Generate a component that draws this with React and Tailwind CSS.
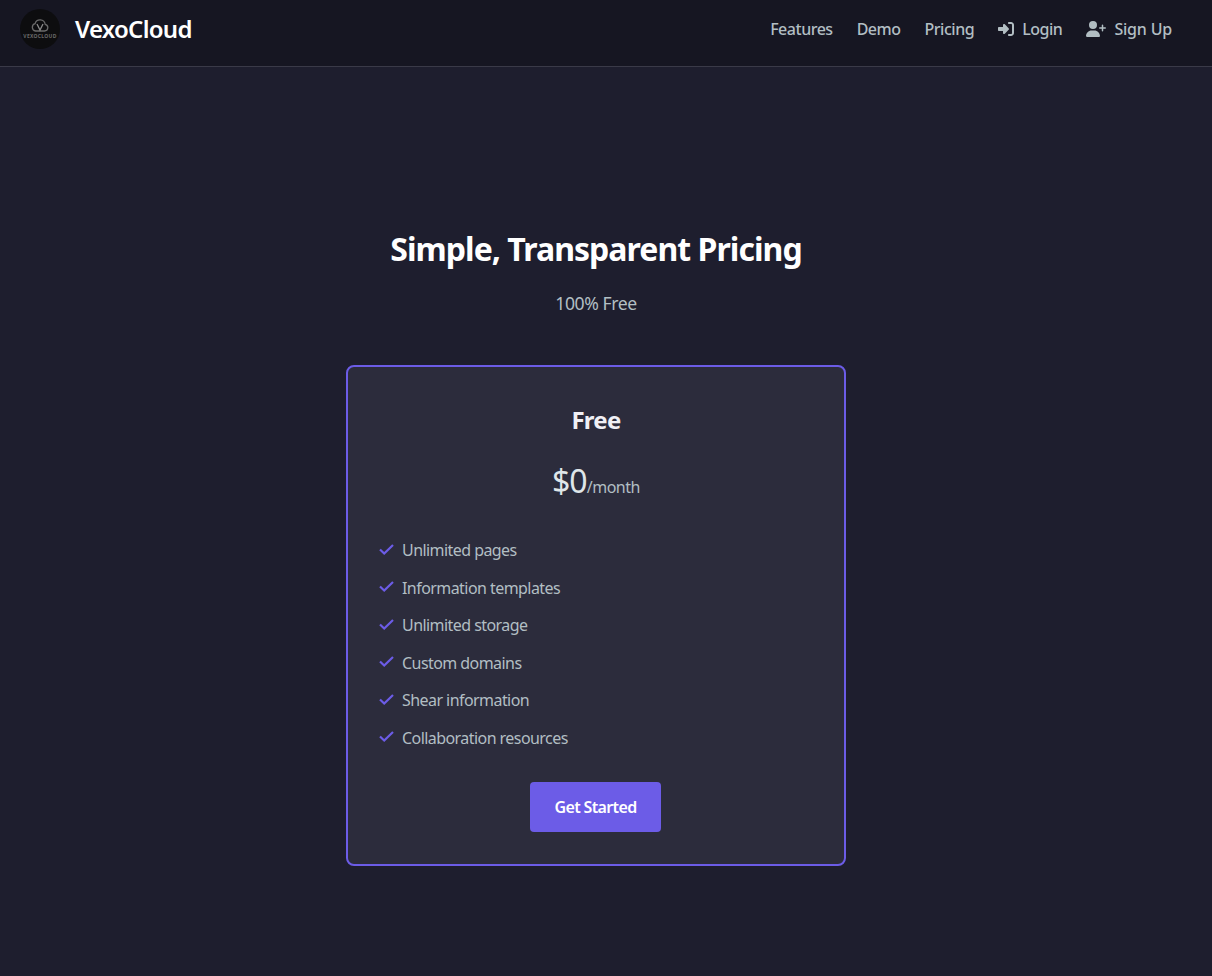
import { FaRightToBracket, FaUserPlus } from "react-icons/fa6";

const features = [
  "Unlimited pages",
  "Information templates",
  "Unlimited storage",
  "Custom domains",
  "Shear information",
  "Collaboration resources",
];

function Logo() {
  return (
    <div className="w-10 h-10 rounded-full bg-[#0d0d0f] flex flex-col items-center justify-center">
      <svg className="w-[18px] h-[13px]" viewBox="0 0 18 13" fill="none" stroke="#6a6a6a" strokeWidth="1.3">
        <path d="M4.5 12h9a3.4 3.4 0 0 0 .7-6.7A5.2 5.2 0 0 0 4.1 4.6 3.8 3.8 0 0 0 4.5 12z" />
        <path d="M6 5l3 6 3-6" stroke="#8a8a8a" />
      </svg>
      <span className="mt-[1px] text-[5px] leading-[6px] font-bold tracking-[0.3px] text-[#6a6a6a]">VEXOCLOUD</span>
    </div>
  );
}

function NavLink({ icon, children }) {
  return (
    <a href="#" className="flex items-center gap-2 text-[16px] font-medium tracking-[-0.03em] text-[#b2bec3] no-underline">
      {icon}
      {children}
    </a>
  );
}

export default function App() {
  return (
    <div className="min-h-[976px] bg-[#1e1e2e] font-['Noto_Sans',sans-serif]">
      <header className="h-[67px] bg-[#161622] border-b border-[#3a3a48] flex items-center justify-between pl-5 pr-10 pb-[8px]">
        <div className="flex items-center gap-[15px]">
          <Logo />
          <span className="text-2xl font-semibold tracking-[-0.03em] text-white">VexoCloud</span>
        </div>
        <nav className="flex items-center gap-6">
          <NavLink>Features</NavLink>
          <NavLink>Demo</NavLink>
          <NavLink>Pricing</NavLink>
          <NavLink icon={<FaRightToBracket className="w-4 h-4" />}>Login</NavLink>
          <NavLink icon={<FaUserPlus className="w-5 h-4" />}>
            <span className="tracking-[-0.012em]">Sign Up</span>
          </NavLink>
        </nav>
      </header>

      <main className="flex flex-col items-center pt-[160px] pr-5">
        <h1 className="text-[32px] leading-[44px] font-bold tracking-[-0.03em] text-white">Simple, Transparent Pricing</h1>
        <p className="mt-[20px] text-[17.6px] leading-6 tracking-[-0.025em] text-[#b2bec3]">100% Free</p>

        <div className="mt-[50px] w-[500px] h-[501px] rounded-lg border-2 border-[#6c5ce7] bg-[#2c2c3c] px-8 pt-[39px]">
          <h2 className="text-center text-[24px] leading-[28px] font-bold tracking-[-0.03em] text-[#f0f0f5]">Free</h2>
          <div className="mt-[25px] flex items-baseline justify-center text-[#dfe6e9]">
            <span className="text-[32px] leading-[44px] tracking-[-0.03em]">$0</span>
            <span className="text-base tracking-[-0.03em] text-[#b2bec3]">/month</span>
          </div>
          <ul className="mt-[35px] flex flex-col gap-[13.6px]">
            {features.map((f) => (
              <li key={f} className="flex items-center gap-2 text-[16px] leading-6 tracking-[-0.035em] text-[#b2bec3]">
                <svg className="-ml-[1px] -mt-[2px] w-[15px] h-[11px] shrink-0" viewBox="0 0 15 11" fill="none" stroke="#6c5ce7" strokeWidth="2.2">
                  <path d="M1 5.5L5.2 9.5L14 1" />
                </svg>
                {f}
              </li>
            ))}
          </ul>
          <div className="mt-[32px] flex justify-center pr-[1px]">
            <button className="w-[131px] h-[50px] rounded bg-[#6c5ce7] text-[16px] font-semibold tracking-[-0.04em] text-white">
              Get Started
            </button>
          </div>
        </div>
      </main>
    </div>
  );
}
